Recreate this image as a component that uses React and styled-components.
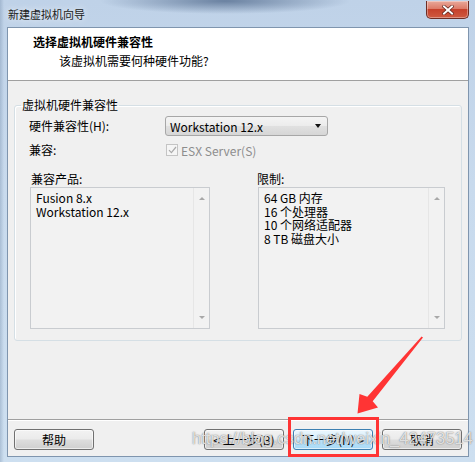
import React from "react";
import styled, { createGlobalStyle } from "styled-components";

const Global = createGlobalStyle`
  html, body { margin: 0; padding: 0; }
  body { font-family: "Noto Sans CJK SC", "Noto Sans", sans-serif; font-size: 12px; color: #000; }
  * { box-sizing: border-box; }
`;

const Window = styled.div`
  position: relative;
  width: 475px;
  height: 462px;
  display: flex;
  flex-direction: column;
  overflow: hidden;
  background:
    radial-gradient(ellipse 125px 13px at 225px 1px, rgba(70, 95, 130, 0.7), rgba(70, 95, 130, 0) 100%),
    linear-gradient(90deg, rgba(110, 135, 165, 0.35) 0px, rgba(110, 135, 165, 0) 4px),
    linear-gradient(180deg, #bfd2e8 0%, #c8daed 40%, #cddff0 100%);
`;

const TitleBar = styled.div`
  height: 27px;
  flex-shrink: 0;
  display: flex;
  align-items: flex-start;
  padding: 0 6px 0 8px;
`;

const TitleText = styled.span`
  margin-top: 7px;
  font-size: 11px;
  line-height: 14px;
  color: #1a1a1a;
  text-shadow: 0 0 6px rgba(255, 255, 255, 0.9);
`;

const CloseButton = styled.div`
  margin-left: auto;
  margin-top: 1px;
  width: 43px;
  height: 18px;
  border: 1px solid #6e2d24;
  border-top: none;
  border-radius: 0 0 5px 5px;
  background: linear-gradient(180deg, #e9a99b 0%, #dd7b68 45%, #c6412b 50%, #cf5a40 100%);
  display: flex;
  align-items: center;
  justify-content: center;
  box-shadow: inset 0 0 0 1px rgba(255, 255, 255, 0.35);
`;

const Frame = styled.div`
  flex: 1;
  margin: 0 6px 5px 7px;
  border: 1px solid #7f95ae;
  display: flex;
  flex-direction: column;
  background: #f0f0f0;
`;

const Header = styled.div`
  height: 53px;
  flex-shrink: 0;
  background: #fff;
  border-bottom: 1px solid #a0a0a0;
  padding: 6px 0 0 25px;
`;

const HeaderTitle = styled.div`
  font-weight: 700;
  font-size: 12px;
  line-height: 16px;
`;

const HeaderSub = styled.div`
  margin: 3px 0 0 26px;
  line-height: 16px;
`;

const Body = styled.div`
  flex: 1;
  padding: 16px 7px 0 6px;
`;

const Group = styled.fieldset`
  margin: 0;
  padding: 0;
  border: 1px solid #d5dfe5;
  border-radius: 3px;
  box-shadow: inset 1px 1px 0 #fff;
`;

const Legend = styled.legend`
  margin-left: 6px;
  padding: 0 1px;
  line-height: 16px;
`;

const GroupContent = styled.div`
  padding: 3px 16px 11px 14px;
`;

const FormGrid = styled.div`
  display: grid;
  grid-template-columns: 136px 163px;
  grid-template-rows: 20px 18px;
  row-gap: 5px;
  align-items: center;
`;

const Label = styled.span`
  line-height: 16px;
`;

const Select = styled.div`
  height: 20px;
  border: 1px solid #a7a7a7;
  border-radius: 3px;
  background: linear-gradient(180deg, #f4f4f4 0%, #ececec 48%, #e0e0e0 52%, #d6d6d6 100%);
  display: flex;
  align-items: center;
  padding: 0 6px 0 4px;
  font-size: 12px;
`;

const SelectArrow = styled.span`
  margin-left: auto;
  width: 0;
  height: 0;
  border-left: 3.5px solid transparent;
  border-right: 3.5px solid transparent;
  border-top: 4px solid #111;
`;

const CheckRow = styled.div`
  display: flex;
  align-items: center;
  gap: 3px;
  color: #8d8d8d;
  padding-left: 1px;
`;

const CheckBox = styled.span`
  width: 12px;
  height: 12px;
  border: 1px solid #c4c4c4;
  background: #f5f5f5;
  display: flex;
  align-items: center;
  justify-content: center;
`;

const ListsRow = styled.div`
  display: flex;
  margin-top: 12px;
  margin-left: 1px;
  gap: 48px;
`;

const ListColumn = styled.div`
  display: flex;
  flex-direction: column;
  width: ${(p) => p.$w}px;
`;

const ListLabel = styled.div`
  line-height: 16px;
  margin-left: ${(p) => p.$offset || 0}px;
`;

const ListBox = styled.div`
  height: 142px;
  border: 1px solid #c9ccd0;
  background: #f2f2f2;
  display: flex;
`;

const ListItems = styled.div`
  flex: 1;
  padding: 3px 5px;
  line-height: ${(p) => p.$lh}px;
`;

const ScrollTrack = styled.div`
  width: 16px;
  border-left: 1px solid #e6e6e6;
  display: flex;
  flex-direction: column;
  justify-content: space-between;
  align-items: center;
  padding: 9px 0 9px;
`;

const ScrollArrow = styled.span`
  width: 0;
  height: 0;
  border-left: 3px solid transparent;
  border-right: 3px solid transparent;
  ${(p) => (p.$up ? "border-bottom: 3px solid #a8a8a8;" : "border-top: 3px solid #a8a8a8;")}
`;

const Footer = styled.div`
  height: 37px;
  flex-shrink: 0;
  border-top: 1px solid #a0a0a0;
  box-shadow: inset 0 1px 0 #fff;
  display: flex;
  align-items: flex-start;
  padding: 9px 6px 0 6px;
  gap: 9px;
`;

const Button = styled.div`
  width: 80px;
  height: 21px;
  border: 1px solid ${(p) => (p.$default ? "#3c7fb1" : "#707070")};
  border-radius: 3px;
  background: ${(p) =>
    p.$default
      ? "linear-gradient(180deg, #eaf6fd 0%, #d9f0fc 48%, #bee6fd 52%, #a7d9f5 100%)"
      : "linear-gradient(180deg, #f2f2f2 0%, #ebebeb 48%, #dddddd 52%, #cfcfcf 100%)"};
  box-shadow: inset 0 0 0 1px rgba(255, 255, 255, 0.6);
  display: flex;
  align-items: center;
  justify-content: center;
  font-size: 12px;
  line-height: 16px;
  margin-left: ${(p) => (p.$push ? "auto" : "0")};
`;

const Watermark = styled.div`
  position: absolute;
  left: 192px;
  top: 428px;
  font-family: "Liberation Sans", Arial, sans-serif;
  font-size: 16.5px;
  line-height: 20px;
  color: rgba(252, 252, 252, 0.8);
  text-shadow: 0 0 1px rgba(70, 70, 70, 0.7), 0 0 2px rgba(120, 120, 120, 0.4);
  white-space: nowrap;
  pointer-events: none;
`;

const Highlight = styled.div`
  position: absolute;
  left: 288px;
  top: 417px;
  width: 91px;
  height: 40px;
  border: 3px solid #ff3434;
  pointer-events: none;
`;

const Overlay = styled.svg`
  position: absolute;
  left: 0;
  top: 0;
  pointer-events: none;
`;

export default function App() {
  return (
    <>
      <Global />
      <Window>
        <TitleBar>
          <TitleText>新建虚拟机向导</TitleText>
          <CloseButton>
            <svg width="12" height="10" viewBox="0 0 12 10">
              <path d="M2 1.5 L10 8.5 M10 1.5 L2 8.5" stroke="#5a2018" strokeWidth="3.4" strokeLinecap="square" />
              <path d="M2 1.5 L10 8.5 M10 1.5 L2 8.5" stroke="#fff" strokeWidth="2" strokeLinecap="square" />
            </svg>
          </CloseButton>
        </TitleBar>
        <Frame>
          <Header>
            <HeaderTitle>选择虚拟机硬件兼容性</HeaderTitle>
            <HeaderSub>该虚拟机需要何种硬件功能?</HeaderSub>
          </Header>
          <Body>
            <Group>
              <Legend>虚拟机硬件兼容性</Legend>
              <GroupContent>
                <FormGrid>
                  <Label>硬件兼容性(H):</Label>
                  <Select>
                    Workstation 12.x
                    <SelectArrow />
                  </Select>
                  <Label>兼容:</Label>
                  <CheckRow>
                    <CheckBox>
                      <svg width="9" height="8" viewBox="0 0 9 8">
                        <path d="M1 4.2 L3.4 6.6 L8 1" fill="none" stroke="#a9a9a9" strokeWidth="1.2" />
                      </svg>
                    </CheckBox>
                    ESX Server(S)
                  </CheckRow>
                </FormGrid>
                <ListsRow>
                  <ListColumn $w={180}>
                    <ListLabel $offset={1}>兼容产品:</ListLabel>
                    <ListBox>
                      <ListItems $lh={14}>
                        <div>Fusion 8.x</div>
                        <div>Workstation 12.x</div>
                      </ListItems>
                      <ScrollTrack>
                        <ScrollArrow $up />
                        <ScrollArrow />
                      </ScrollTrack>
                    </ListBox>
                  </ListColumn>
                  <ListColumn $w={187}>
                    <ListLabel $offset={-1}>限制:</ListLabel>
                    <ListBox>
                      <ListItems $lh={13.6}>
                        <div>64 GB 内存</div>
                        <div>16 个处理器</div>
                        <div>10 个网络适配器</div>
                        <div>8 TB 磁盘大小</div>
                      </ListItems>
                      <ScrollTrack>
                        <ScrollArrow $up />
                        <ScrollArrow />
                      </ScrollTrack>
                    </ListBox>
                  </ListColumn>
                </ListsRow>
              </GroupContent>
            </Group>
          </Body>
          <Footer>
            <Button>帮助</Button>
            <Button $push>&lt; 上一步(B)</Button>
            <Button $default>下一步(N) &gt;</Button>
            <Button>取消</Button>
          </Footer>
        </Frame>
        <Watermark>https://blog.csdn.net/weixin_42473514</Watermark>
        <Highlight />
        <Overlay width="475" height="462" viewBox="0 0 475 462">
          <polygon
            points="423,337.4 372.7,401.3 378,407.5 357.5,413.5 359.5,394 367.3,396.7 421.6,336.4"
            fill="#ff3434"
          />
        </Overlay>
      </Window>
    </>
  );
}
